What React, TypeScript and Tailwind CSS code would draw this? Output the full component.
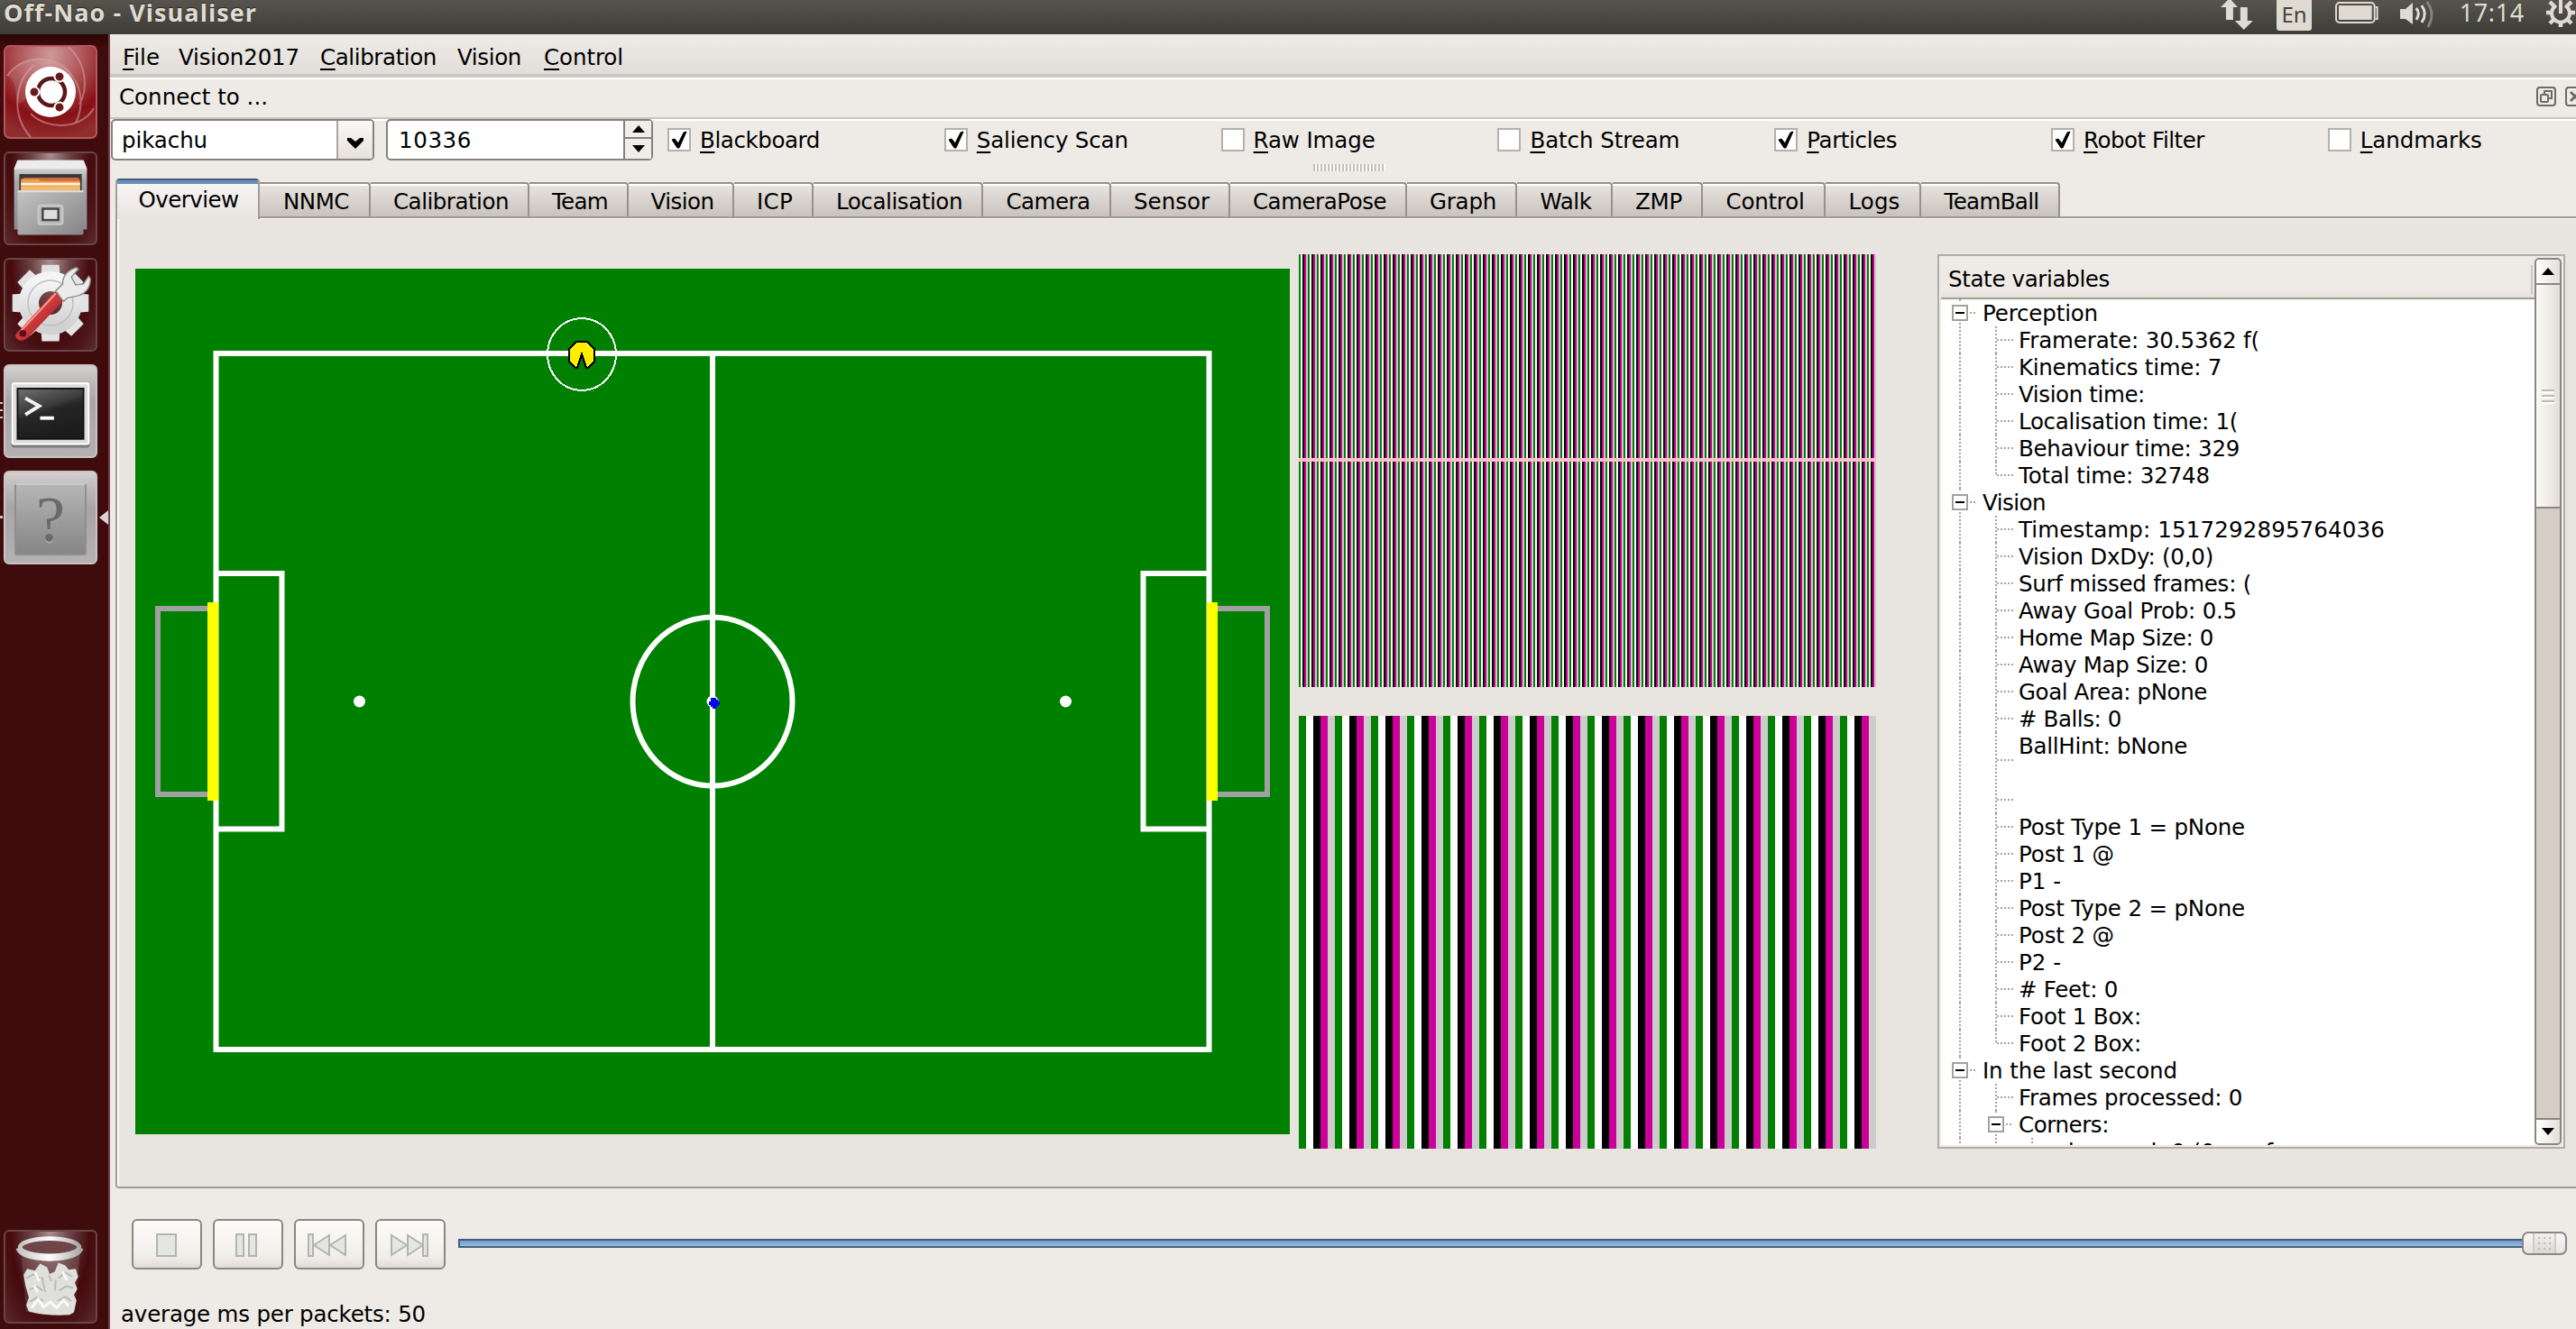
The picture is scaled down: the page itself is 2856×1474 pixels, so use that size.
import React, { useLayoutEffect, useRef } from "react";

/* Text whose letter spacing is tuned so that it spans the given width. */
function Fit({ w, children, className = "" }: { w: number; children: React.ReactNode; className?: string }) {
  const ref = useRef<HTMLSpanElement>(null);
  useLayoutEffect(() => {
    const el = ref.current;
    if (!el) return;
    el.style.letterSpacing = "0px";
    const n = (el.textContent ?? "").length;
    const natural = el.getBoundingClientRect().width;
    if (n > 1) el.style.letterSpacing = `${(w + 2 - natural) / n}px`;
  }, [w]);
  return (
    <span ref={ref} className={`inline-block whitespace-pre ${className}`}>
      {children}
    </span>
  );
}

/* A label whose first letter is its keyboard mnemonic. */
function Mnemonic({ text, w, plain = false }: { text: string; w: number; plain?: boolean }) {
  return (
    <Fit w={w}>
      {plain ? text : (
        <>
          <span className="underline decoration-2 underline-offset-[4px] [text-decoration-skip-ink:none]">{text[0]}</span>
          {text.slice(1)}
        </>
      )}
    </Fit>
  );
}

function TitleBar() {
  return (
    <div className="flex h-[38px] shrink-0 items-start bg-linear-to-b from-[#56544c] to-[#3d3c37] text-[#dfdbd2]">
      <div className="ml-[4px] h-[38px] flex-1 font-['Open_Sans','Noto_Sans',sans-serif] text-[27px] leading-[28px] font-bold [text-shadow:0_-1px_1px_#2a2925]">
        <Fit w={279}>Off-Nao - Visualiser</Fit>
      </div>
      <div className="flex w-[394px] shrink-0 items-start">
        <svg className="h-[36px] w-[36px]" viewBox="0 0 36 36" fill="#dfdbd2">
          <path d="M10 -2 19 8H14V22H6V8H0ZM22 8h8V23h6L26 33 16 23h6Z" />
        </svg>
        <div className="ml-[26px] flex h-[34px] w-[40px] items-start justify-center rounded-b-[3px] bg-[#dfdbd2] font-['Noto_Sans',sans-serif] text-[24px] text-[#45433d]">
          <Fit w={26} className="leading-[31px]">En</Fit>
        </div>
        <svg className="ml-[26px] h-[30px] w-[50px]" viewBox="0 0 50 30" fill="none" stroke="#dfdbd2" strokeWidth="2">
          <rect x="1" y="3" width="43" height="22" rx="4" />
          <rect x="4" y="6" width="37" height="16" fill="#dfdbd2" stroke="none" />
          <path d="M45 8h2v13h-2" />
        </svg>
        <svg className="ml-[22px] h-[34px] w-[42px]" viewBox="0 0 42 34" fill="none" stroke="#dfdbd2" strokeWidth="3">
          <path d="M0 10h6l8-7v24l-8-6H0Z" fill="#dfdbd2" stroke="none" />
          <path d="M18 9q5 6 0 13M24 6q7 9 0 19" />
          <path d="M30 2q10 13 1 28" stroke="#85827a" />
        </svg>
        <div className="ml-[24px] w-[96px] font-['Noto_Sans',sans-serif] text-[27px] leading-[28px]">
          <Fit w={70}>17:14</Fit>
        </div>
        <svg className="-mt-[3px] h-[34px] w-[34px] shrink-0" viewBox="-17 -17 34 34" fill="none" stroke="#dfdbd2" strokeWidth="5">
          <path d="M-5 -8A10 10 0 1 0 5 -8" strokeWidth="4" />
          <path d="M0 -17V1" strokeWidth="4" />
          <path d="M-11 0h-5M11 0h5M-8 8l-4 4M8 8l4 4M0 10v6M-8 -8l-4 -4M8 -8l4 -4" strokeWidth="4.5" />
        </svg>
      </div>
    </div>
  );
}

const darkTile = "bg-[radial-gradient(ellipse_at_50%_0%,#a98f90_0%,#6b4345_30%,#450a0d_62%,#4c1619_80%,#5a2a2d_100%)] border-2 border-[#6a4446]";
const lightTile = "bg-[linear-gradient(#d3d0cf,#bdb9b9_18%,#a9a4a5_40%,#b5b0b1)] border-2 border-[#c9c5c5]";

function UbuntuIcon() {
  return (
    <svg viewBox="0 0 104 104" className="size-[104px]">
      <defs>
        <radialGradient id="red" cx=".5" cy=".1" r=".9">
          <stop offset="0" stopColor="#cf9a9b" />
          <stop offset=".45" stopColor="#a94b4e" />
          <stop offset=".75" stopColor="#871015" />
          <stop offset="1" stopColor="#8f2c2e" />
        </radialGradient>
      </defs>
      <rect x="1" y="1" width="102" height="102" rx="6" fill="url(#red)" stroke="#b4585a" strokeWidth="2" />
      <path d="M4 34C20 10 60 8 76 34C88 50 88 70 80 86M72 2C92 20 94 48 84 66M30 102C8 78 12 40 34 22M100 70C88 92 50 96 30 76" fill="none" stroke="#d39a9c" strokeOpacity=".6" strokeWidth="2" />
      <path d="M4 34C20 10 60 8 76 34L60 40 24 60C8 78 20 40 4 34Z" fill="#fff" fillOpacity=".12" />
      <circle cx="52" cy="52" r="28" fill="#fff" />
      <circle cx="53" cy="52" r="15" fill="none" stroke="#5c1719" strokeWidth="4.5" />
      <g fill="#6b1a1c" stroke="#fff" strokeWidth="2">
        <circle cx="34" cy="52" r="5.500" />
        <circle cx="62" cy="35" r="5.500" />
        <circle cx="62" cy="69" r="5.500" />
      </g>
    </svg>
  );
}

function FilesIcon() {
  return (
    <svg viewBox="0 0 104 104" className="size-[104px]">
      <defs>
        <linearGradient id="cab" x2="0" y2="1">
          <stop offset="0" stopColor="#e8e8e8" />
          <stop offset=".3" stopColor="#a9a9a9" />
          <stop offset="1" stopColor="#8b8b8b" />
        </linearGradient>
        <linearGradient id="drawer" x2="1" y2="1">
          <stop offset="0" stopColor="#c4c4c4" />
          <stop offset="1" stopColor="#858585" />
        </linearGradient>
      </defs>
      <path d="M14 8h76l4 10v70H10V18Z" fill="url(#cab)" />
      <path d="M14 8h76l4 10H10Z" fill="#ececec" />
      <rect x="16" y="24" width="72" height="22" fill="#37393a" />
      <path d="M18 30l4-2h62l2 3v14H18Z" fill="#d3683a" />
      <path d="M18 30h20l3 2h45v11H18Z" fill="#e9a04c" />
      <path d="M18 34h68v3H18Z" fill="#fff1e2" />
      <path d="M18 38h68v5H18Z" fill="#f2ba6b" />
      <rect x="14" y="43" width="76" height="51" rx="2" fill="url(#drawer)" />
      <path d="M14 44h76" stroke="#e0e0e0" strokeWidth="2" />
      <rect x="38" y="60" width="28" height="22" rx="3" fill="#b9b9b9" stroke="#cacaca" strokeWidth="2" />
      <rect x="43" y="64" width="18" height="13" fill="#dedede" stroke="#444" strokeWidth="2.500" />
    </svg>
  );
}

function SettingsIcon() {
  const teeth = [0, 45, 90, 135, 180, 225, 270, 315];
  return (
    <svg viewBox="0 0 104 104" className="size-[104px]">
      <defs>
        <linearGradient id="gear" x2="0" y2="1">
          <stop offset="0" stopColor="#f5f5f5" />
          <stop offset="1" stopColor="#d2d2d2" />
        </linearGradient>
        <linearGradient id="handle" x2="1" y2="1">
          <stop offset=".2" stopColor="#f0504a" />
          <stop offset="1" stopColor="#8c1020" />
        </linearGradient>
      </defs>
      <g fill="#e3e3e3">
        {teeth.map((a) => (
          <path key={a} d="M41 20l1-14h20l1 14Z" transform={`rotate(${a} 52 50)`} />
        ))}
      </g>
      <circle cx="52" cy="50" r="25" fill="none" stroke="url(#gear)" strokeWidth="23" />
      <circle cx="52" cy="50" r="26" fill="none" stroke="#bdbdbd" strokeWidth="1.500" />
      <path d="M16 82 58 36l10 10L26 90Q18 96 13 91Q9 87 16 82Z" fill="url(#handle)" />
      <path d="M17 83 58 39" stroke="#ff9a8c" strokeWidth="2" />
      <circle cx="20" cy="85" r="4" fill="#5a0d12" />
      <path d="M58 36l8-8Q66 14 82 9l2 2-8 9 5 9 9-1 6-9 2 3Q98 38 82 42L72 44l-5 4Z" fill="#ececec" stroke="#8b8f86" strokeWidth="1.500" />
    </svg>
  );
}

function TerminalIcon() {
  return (
    <svg viewBox="0 0 104 104" className="size-[104px]">
      <defs>
        <linearGradient id="screen" x2=".4" y2="1">
          <stop offset="0" stopColor="#707070" />
          <stop offset=".45" stopColor="#3b3b3b" />
          <stop offset=".55" stopColor="#262626" />
          <stop offset="1" stopColor="#1c1c1c" />
        </linearGradient>
      </defs>
      <rect x="7" y="20" width="90" height="74" rx="3" fill="#7c7c7a" />
      <rect x="8" y="20" width="88" height="70" rx="2" fill="#dcdcda" stroke="#fff" strokeWidth="2" />
      <rect x="14" y="26" width="76" height="58" fill="url(#screen)" stroke="#111" strokeWidth="2" />
      <path d="M23 37l16 9-16 10" fill="none" stroke="#f4f4f4" strokeWidth="4" />
      <path d="M40 60h16" stroke="#fff" strokeWidth="4" />
    </svg>
  );
}

function UnknownIcon() {
  return (
    <div className="flex size-[104px] items-center justify-center">
      <div className="mt-[4px] flex h-[80px] w-[80px] items-center justify-center rounded-[3px] border-2 border-[#8f8f8f] border-t-[#c9c9c9] bg-linear-to-b from-[#b5b5b5] to-[#868686] font-['Liberation_Serif',serif] text-[72px] leading-[72px] text-[#6a6a6a] [text-shadow:0_2px_0_#a5a5a5]">
        ?
      </div>
    </div>
  );
}

function TrashIcon() {
  return (
    <svg viewBox="0 0 104 104" className="size-[104px]">
      <defs>
        <linearGradient id="rim" x2="1">
          <stop offset="0" stopColor="#c4c4c2" />
          <stop offset=".5" stopColor="#fff" />
          <stop offset="1" stopColor="#a9a9a7" />
        </linearGradient>
      </defs>
      <path d="M18 24 24 92Q52 100 80 92L86 24Z" fill="#fff" fillOpacity=".13" />
      <path d="M21 50l4-7 9 2 6-8 8 4 3 8 6-3 4-10 8 3 4 5 8-1 3 9-4 7 3 7-4 7 3 6-3 14-5 3Q50 98 27 92l-3-7 3-9-4-14Z" fill="#dfe0dc" />
      <path d="M24 54l9-5 7 5M50 50l3 7M61 54l8-7 8 5M28 67l8-4 7 5M62 68l8-5 8 2M28 81l8-5 8 4M60 80l9-5 7 5M42 52l4 18M58 56l-1 12" fill="none" stroke="#b9bcb5" strokeWidth="2" />
      <path d="M30 88l8-10 6 9 8-6 7 7 8-9 6 7M34 47l5 10M66 46l5 10M33 62l4 8" fill="none" stroke="#fafafa" strokeWidth="3" />
      <ellipse cx="51" cy="18" rx="34" ry="10" fill="#6f4547" stroke="url(#rim)" strokeWidth="5" />
      <path d="M15 19Q18 30 51 31Q84 30 87 19" fill="none" stroke="url(#rim)" strokeWidth="6" />
    </svg>
  );
}

function Launcher() {
  return (
    <div className="flex w-[122px] shrink-0 flex-col border-r-2 border-[#77404b] bg-[linear-gradient(#2c0507,#400b0c_14px)]">
      <div className="mt-[12px] flex flex-1 flex-col gap-[14px] pl-[4px]">
        <div className="size-[104px]"><UbuntuIcon /></div>
        <div className={`flex size-[104px] items-center justify-center overflow-hidden rounded-[6px] ${darkTile}`}><FilesIcon /></div>
        <div className={`flex size-[104px] items-center justify-center overflow-hidden rounded-[6px] ${darkTile}`}><SettingsIcon /></div>
        <div className={`relative flex size-[104px] items-center justify-center rounded-[6px] ${lightTile}`}>
          <TerminalIcon />
          <svg className="absolute top-[40px] -left-[6px] h-[20px] w-[3px]" viewBox="0 0 3 20"><path d="M0 1h3M0 9h3M0 17h3" stroke="#c9c4c4" strokeWidth="2" /></svg>
        </div>
        <div className={`relative flex size-[104px] items-center justify-center rounded-[6px] ${lightTile}`}>
          <UnknownIcon />
          <svg className="absolute top-[42px] -right-[14px] h-[16px] w-[10px]" viewBox="0 0 10 16"><path d="M10 0v16L0 8Z" fill="#d8d4d4" /></svg>
          <svg className="absolute top-[48px] -left-[6px] h-[3px] w-[3px]" viewBox="0 0 3 3"><path d="M0 0h3v3H0Z" fill="#c9c4c4" /></svg>
        </div>
      </div>
      <div className={`mb-[6px] ml-[4px] flex size-[104px] items-center justify-center overflow-hidden rounded-[6px] ${darkTile}`}><TrashIcon /></div>
    </div>
  );
}

function MenuBar() {
  return (
    <div className="flex h-[50px] shrink-0 items-start border-b-2 border-white bg-[linear-gradient(#efece8,#e1ddd8_44px,#cbc7c2_44px)] pt-[10px] pl-[14px] leading-[32px]">
      <div className="w-[62px]"><Mnemonic text="File" w={39} /></div>
      <div className="w-[157px]"><Mnemonic text="Vision2017" w={132} plain /></div>
      <div className="w-[152px]"><Mnemonic text="Calibration" w={127} /></div>
      <div className="w-[96px]"><Mnemonic text="Vision" w={69} plain /></div>
      <div><Mnemonic text="Control" w={86} /></div>
    </div>
  );
}

function DockTitle() {
  return (
    <div className="flex h-[46px] shrink-0 items-start border-b-2 border-white bg-[linear-gradient(#eeebe6_42px,#c9c5bf_42px)] pt-[4px] pl-[10px] leading-[32px]">
      <div className="w-[2680px] shrink-0"><Fit w={163}>Connect to ...</Fit></div>
      <svg className="mt-[4px] h-[22px] w-[22px] shrink-0" viewBox="0 0 22 22" fill="none" stroke="#6d6a66" strokeWidth="2">
        <rect x="1" y="1" width="20" height="20" rx="3" />
        <rect x="5" y="9" width="8" height="8" rx="1" />
        <path d="M9 8V5h8v8h-3" />
      </svg>
      <svg className="mt-[4px] ml-[10px] h-[22px] w-[22px] shrink-0" viewBox="0 0 22 22" fill="none" stroke="#6d6a66" strokeWidth="2">
        <rect x="1" y="1" width="20" height="20" rx="3" />
        <path d="M6 6l10 10M16 6 6 16" strokeWidth="3" />
      </svg>
    </div>
  );
}

const checks: { label: string; w: number; on: boolean }[] = [
  { label: "Blackboard", w: 131, on: true },
  { label: "Saliency Scan", w: 166, on: true },
  { label: "Raw Image", w: 133, on: false },
  { label: "Batch Stream", w: 164, on: false },
  { label: "Particles", w: 98, on: true },
  { label: "Robot Filter", w: 132, on: true },
  { label: "Landmarks", w: 133, on: false },
];

function ConnectRow() {
  return (
    <div className="flex h-[64px] shrink-0 items-start">
      <div className="-mt-[2px] ml-[1px] flex h-[46px] w-[292px] shrink-0 rounded-[5px] border-2 border-[#86817b] bg-white">
        <div className="mt-[6px] flex-1 pl-[10px] leading-[32px]"><Fit w={93}>pikachu</Fit></div>
        <div className="flex w-[40px] items-center justify-center rounded-r-[3px] border-l-2 border-[#aaa59f] bg-linear-to-b from-[#faf8f6] to-[#e6e1dc]">
          <svg className="mt-[7px] h-[12px] w-[18px]" viewBox="0 0 18 12"><path d="M0 0h4l5 4 5-4h4v3L9 12 0 3Z" /></svg>
        </div>
      </div>
      <div className="-mt-[2px] ml-[13px] flex h-[46px] w-[296px] shrink-0 rounded-[5px] border-2 border-[#86817b] bg-white">
        <div className="mt-[6px] flex-1 pl-[12px] leading-[32px]"><Fit w={79}>10336</Fit></div>
        <div className="flex w-[31px] flex-col border-l-2 border-[#86817b] bg-[#f0edea]">
          <div className="flex h-[20px] items-center justify-center border-b-2 border-[#86817b]">
            <svg className="h-[8px] w-[14px]" viewBox="0 0 14 8"><path d="M7 0l7 8H0Z" /></svg>
          </div>
          <div className="flex h-[22px] items-center justify-center">
            <svg className="h-[8px] w-[14px]" viewBox="0 0 14 8"><path d="M0 0h14L7 8Z" /></svg>
          </div>
        </div>
      </div>
      <div className="ml-[16px] flex flex-col">
        <div className="flex h-[42px] pt-[6px]">
          {checks.map((c) => (
            <div key={c.label} className="flex w-[306.800px] shrink-0 leading-[32px]">
              <div className="mt-[2px] mr-[10px] size-[26px] shrink-0 border-2 border-[#b5b0a9] bg-white">
                {c.on && (
                  <svg className="size-[22px]" viewBox="0 0 22 22" fill="none" stroke="#000">
                    <path d="M3 11l3-1 4 5 6-12 3-1-8 18h-2Z" fill="#000" strokeWidth="1" />
                  </svg>
                )}
              </div>
              <Mnemonic text={c.label} w={c.w} />
            </div>
          ))}
        </div>
        <div className="mt-[6px] ml-[716px] h-[8px] w-[80px] bg-[repeating-linear-gradient(90deg,#c3bfb9_0_2px,#fbfaf9_2px_4px)]" />
      </div>
    </div>
  );
}

const tabs: { label: string; box: string; w: number }[] = [
  { label: "NNMC", box: "w-[123px]", w: 71 },
  { label: "Calibration", box: "w-[176px]", w: 126 },
  { label: "Team", box: "w-[110px]", w: 60 },
  { label: "Vision", box: "w-[117px]", w: 68 },
  { label: "ICP", box: "w-[88px]", w: 38 },
  { label: "Localisation", box: "w-[188px]", w: 138 },
  { label: "Camera", box: "w-[142px]", w: 91 },
  { label: "Sensor", box: "w-[132px]", w: 82 },
  { label: "CameraPose", box: "w-[196px]", w: 146 },
  { label: "Graph", box: "w-[122px]", w: 72 },
  { label: "Walk", box: "w-[106px]", w: 55 },
  { label: "ZMP", box: "w-[100px]", w: 50 },
  { label: "Control", box: "w-[136px]", w: 85 },
  { label: "Logs", box: "w-[106px]", w: 55 },
  { label: "TeamBall", box: "w-[154px]", w: 103 },
];

function Tabs() {
  return (
    <div className="flex h-[46px] shrink-0 items-end pl-[6px]">
      <div className="h-[46px] w-[160px] shrink-0 rounded-t-[4px] border-x-2 border-[#a39e98] bg-[linear-gradient(#3f5c80_2px,#6890bb_2px_6px,#f7f5f3_6px,#e8e4e0)] pt-[8px] pl-[2px] text-center leading-[32px]">
        <Fit w={109}>Overview</Fit>
      </div>
      <div className="flex h-[42px] flex-1 items-start bg-[linear-gradient(transparent_38px,#9f9993_38px_40px,#fff_40px)]">
        {tabs.map((t) => (
          <div key={t.label} className={`h-[38px] shrink-0 rounded-tr-[4px] border-t-2 border-r-2 border-[#96918b] bg-[linear-gradient(#fff_2px,#e6e2de_2px,#c9c3bc)] pt-[4px] pl-[4px] text-center leading-[32px] ${t.box}`}>
            <Fit w={t.w}>{t.label}</Fit>
          </div>
        ))}
      </div>
    </div>
  );
}

function Field() {
  return (
    <svg className="mt-[16px] h-[960px] w-[1280px] shrink-0 bg-[#008000]" viewBox="0 0 1280 960" fill="none">
      <g stroke="#fff" strokeWidth="6">
        <rect x="89.500" y="94" width="1101" height="772" />
        <path d="M640 92V868" />
        <path d="M90 338H162.500V621.500H90M1190 338H1117.500V621.500H1190" />
        <ellipse cx="640" cy="480" rx="88.500" ry="93.500" />
      </g>
      <g fill="#fff">
        <circle cx="248.500" cy="480" r="6.500" />
        <circle cx="1031.500" cy="480" r="6.500" />
        <circle cx="640" cy="480" r="6.500" />
      </g>
      <path d="M84 377H25V583H84M1196 377H1255V583H1196" stroke="#a0a0a4" strokeWidth="6" />
      <path d="M80 370h12V590H80ZM1188 370h12V590h-12Z" fill="#ff0" />
      <path d="M638 476h6v2h2v2h2v4h-2v2h-2v2h-4v-2h-2v-2h-2v-4h2Z" fill="#00f" />
      <ellipse cx="495" cy="95" rx="38" ry="40" stroke="#fff" strokeWidth="2" shapeRendering="crispEdges" />
      <path d="M489 81H501L509 89V103L502 110H500L495 95 490 110H488L481 103V89Z" fill="#fe0" stroke="#000" strokeWidth="2" shapeRendering="crispEdges" />
    </svg>
  );
}

function ImagePanes() {
  return (
    <div className="ml-[10px] flex w-[640px] shrink-0 flex-col gap-[32px]">
      <div className="h-[480px] bg-[repeating-linear-gradient(90deg,#008000_0_2px,#fff_2px_4px,#000_4px_6px,#c09_6px_8px,#ccc_8px_10px)] pt-[226px]">
        <div className="h-[4px] bg-[#ffc0cb]" />
      </div>
      <div className="h-[480px] bg-[repeating-linear-gradient(90deg,#008000_0_8px,#fff_8px_16px,#000_16px_24px,#c09_24px_32px,#ccc_32px_40px)]" />
    </div>
  );
}

type Row = { t: string; w: number; d: 0 | 1 | 2; open?: boolean; last?: boolean; tall?: boolean; blank?: boolean };
const rows: Row[] = [
  { t: "Perception", w: 126, d: 0, open: true },
  { t: "Framerate: 30.5362 f(", w: 265, d: 1 },
  { t: "Kinematics time: 7", w: 223, d: 1 },
  { t: "Vision time:", w: 138, d: 1 },
  { t: "Localisation time: 1(", w: 241, d: 1 },
  { t: "Behaviour time: 329", w: 243, d: 1 },
  { t: "Total time: 32748", w: 210, d: 1, last: true },
  { t: "Vision", w: 68, d: 0, open: true },
  { t: "Timestamp: 1517292895764036", w: 404, d: 1 },
  { t: "Vision DxDy: (0,0)", w: 214, d: 1 },
  { t: "Surf missed frames: (", w: 256, d: 1 },
  { t: "Away Goal Prob: 0.5", w: 240, d: 1 },
  { t: "Home Map Size: 0", w: 214, d: 1 },
  { t: "Away Map Size: 0", w: 208, d: 1 },
  { t: "Goal Area: pNone", w: 207, d: 1 },
  { t: "# Balls: 0", w: 112, d: 1 },
  { t: "BallHint: bNone", w: 185, d: 1, tall: true },
  { t: "", w: 0, d: 1, blank: true },
  { t: "Post Type 1 = pNone", w: 249, d: 1 },
  { t: "Post 1 @", w: 104, d: 1 },
  { t: "P1 -", w: 45, d: 1 },
  { t: "Post Type 2 = pNone", w: 249, d: 1 },
  { t: "Post 2 @", w: 104, d: 1 },
  { t: "P2 -", w: 45, d: 1 },
  { t: "# Feet: 0", w: 108, d: 1 },
  { t: "Foot 1 Box:", w: 134, d: 1 },
  { t: "Foot 2 Box:", w: 134, d: 1, last: true },
  { t: "In the last second", w: 214, d: 0, open: true },
  { t: "Frames processed: 0", w: 246, d: 1 },
  { t: "Corners:", w: 98, d: 1, open: true },
  { t: "observed: 0 (0 per frame", w: 304, d: 2 },
];

const vDots = "bg-[repeating-linear-gradient(#a3a3a3_0_2px,transparent_2px_4px)]";
const hDots = "bg-[repeating-linear-gradient(90deg,#a3a3a3_0_2px,transparent_2px_4px)]";

function Toggle() {
  return (
    <div className="flex size-[18px] shrink-0 items-center justify-center border-2 border-[#a3a09d] bg-white">
      <div className="h-[2px] w-[10px] bg-black" />
    </div>
  );
}

function TreeRow({ row }: { row: Row }) {
  return (
    <div className={`flex shrink-0 leading-[32px] ${row.tall ? "h-[60px]" : "h-[30px]"}`}>
      {/* guide lines of the ancestors */}
      {Array.from({ length: row.d }).map((_, i) => (
        <div key={i} className="flex w-[40px] shrink-0 pl-[20px]">
          <div className={`w-[2px] ${vDots}`} />
        </div>
      ))}
      {/* the row's own connector */}
      {row.open ? (
        <div className="flex w-[46px] shrink-0">
          <div className="ml-[12px] flex w-[18px] flex-col items-center">
            <div className={`h-[4px] w-[2px] ${vDots}`} />
            <div className="mt-[2px]"><Toggle /></div>
            <div className={`mt-[2px] h-[4px] w-[2px] ${vDots}`} />
          </div>
          <div className={`mt-[14px] ml-[2px] h-[2px] w-[6px] ${hDots}`} />
        </div>
      ) : (
        <div className="flex w-[46px] shrink-0 pl-[20px]">
          <div className={`w-[2px] ${vDots} ${row.last ? "h-[16px]" : ""}`} />
          <div className={`h-[2px] w-[18px] ${hDots} ${row.tall ? "mt-[30px]" : "mt-[14px]"}`} />
        </div>
      )}
      {!row.blank && <Fit w={row.w}>{row.t}</Fit>}
    </div>
  );
}

function StateTree() {
  return (
    <div className="ml-[68px] flex h-[992px] w-[696px] shrink-0 border-2 border-[#b1aca6] bg-[#efece9] p-[2px]">
      <div className="flex flex-1 flex-col overflow-hidden">
        <div className="flex h-[46px] shrink-0 border-b-2 border-[#a29c95] bg-[linear-gradient(#eeebe6_36px,#e6dfd8)] pt-[8px] pl-[8px] leading-[32px]">
          <div className="flex-1"><Fit w={177}>State variables</Fit></div>
          <div className="mr-[2px] h-[32px] w-[2px] bg-[#c9c9c9]" />
        </div>
        <div className="flex flex-1 flex-col overflow-hidden bg-white">
          {rows.map((r, i) => <TreeRow key={i} row={r} />)}
        </div>
      </div>
      <div className="flex w-[30px] shrink-0 flex-col overflow-hidden rounded-[5px] border-2 border-[#8c867f] bg-[#d6cdc4]">
        <div className="flex h-[28px] shrink-0 items-center justify-center border-b-2 border-[#8c867f] bg-linear-to-r from-white to-[#e4dfda]">
          <svg className="h-[8px] w-[14px]" viewBox="0 0 14 8"><path d="M7 0l7 8H0Z" /></svg>
        </div>
        <div className="flex h-[248px] shrink-0 flex-col items-center border-b-2 border-[#8c867f] bg-linear-to-r from-[#fbfaf8] to-[#e3deda] pt-[116px]">
          <div className="h-[16px] w-[14px] bg-[repeating-linear-gradient(#c2bab2_0_2px,#fff_2px_4px,transparent_4px_6px)]" />
        </div>
        <div className="flex-1" />
        <div className="flex h-[28px] shrink-0 items-center justify-center border-t-2 border-[#8c867f] bg-linear-to-r from-white to-[#e4dfda]">
          <svg className="h-[8px] w-[14px]" viewBox="0 0 14 8"><path d="M0 0h14L7 8Z" /></svg>
        </div>
      </div>
    </div>
  );
}

function Playback() {
  const icons = [
    <path key="s" d="M28 17h21v24H28Z" />,
    <path key="p" d="M26 17h8v24h-8ZM40 17h8v24h-8Z" />,
    <path key="b" d="M16 17h5v24h-5ZM39 18V40L22 29ZM57 18V40L40 29Z" />,
    <path key="f" d="M18 18V40L35 29ZM36 18V40L53 29ZM53 17h5v24h-5Z" />,
  ];
  return (
    <div className="flex h-[56px] shrink-0 items-center pl-[24px]">
      <div className="flex gap-[12px]">
        {icons.map((icon, i) => (
          <div key={i} className="h-[56px] w-[78px] rounded-[6px] border-2 border-[#8b8680] bg-[linear-gradient(#fdfbf9,#f1eeea_75%,#e2dcd7)]">
            <svg className="-mt-[2px] -ml-[2px] h-[56px] w-[78px]" viewBox="0 0 78 56" fill="#e4e6e1" stroke="#b2b4b1" strokeWidth="2">{icon}</svg>
          </div>
        ))}
      </div>
      <div className="mb-[2px] ml-[14px] h-[10px] w-[2288px] shrink-0 border-2 border-r-0 border-[#435f7f] bg-linear-to-b from-[#7199c6] to-[#93bde4]" />
      <div className="mb-[2px] flex h-[26px] w-[50px] shrink-0 justify-center rounded-[7px] border-2 border-[#8b8781] bg-linear-to-b from-[#f8f7f6] to-[#e6e4e0]">
        <div className="flex h-[22px] w-[26px] items-center justify-center border-x-2 border-[#cfccc8] bg-linear-to-b from-[#f2f0ee] to-[#dad7d4]">
          <svg className="h-[14px] w-[14px]" viewBox="0 0 14 14"><path d="M1 0v14M7 0v14M13 0v14" stroke="#bcb8b4" strokeWidth="2" strokeDasharray="2 4" /></svg>
        </div>
      </div>
    </div>
  );
}

export default function App() {
  return (
    <div className="flex h-[1474px] w-[2856px] flex-col overflow-hidden bg-[#eeebe6] font-['DejaVu_Sans',sans-serif] text-[24.5px] text-black">
      <TitleBar />
      <div className="flex flex-1 overflow-hidden">
        <Launcher />
        <div className="flex flex-1 flex-col overflow-hidden">
          <MenuBar />
          <DockTitle />
          <ConnectRow />
          <Tabs />
          <div className="-mt-px ml-[6px] flex h-[1075px] shrink-0 items-start overflow-hidden rounded-bl-[4px] border-b-2 border-l-2 border-[#9f9993] bg-[#e8e4e0]">
            <div className="flex h-full flex-1 border-l-2 border-white pt-[39px] pl-[18px]">
              <Field />
              <ImagePanes />
              <StateTree />
            </div>
          </div>
          <div className="h-[34px] shrink-0" />
          <Playback />
          <div className="mt-[34px] pl-[12px] leading-[32px]"><Fit w={336}>average ms per packets: 50</Fit></div>
        </div>
      </div>
    </div>
  );
}
